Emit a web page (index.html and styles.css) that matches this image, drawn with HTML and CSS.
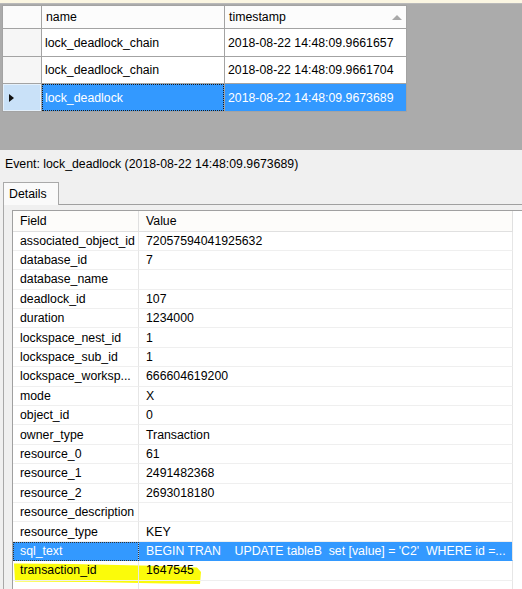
FILE: index.html
```html
<!DOCTYPE html>
<html>
<head>
<meta charset="utf-8">
<link rel="stylesheet" href="styles.css">
</head>
<body>
<div class="app">
  <div class="strip"></div>
  <div class="events">
    <div class="egrid">
      <div class="c rh hdr"></div>
      <div class="c hdr">name</div>
      <div class="c hdr ts">timestamp<span class="sort"></span></div>

      <div class="c rh"></div>
      <div class="c">lock_deadlock_chain</div>
      <div class="c">2018-08-22 14:48:09.9661657</div>

      <div class="c rh"></div>
      <div class="c">lock_deadlock_chain</div>
      <div class="c">2018-08-22 14:48:09.9661704</div>

      <div class="c rh selrh"><span class="tri"></span></div>
      <div class="c sel focus">lock_deadlock</div>
      <div class="c sel">2018-08-22 14:48:09.9673689</div>
    </div>
  </div>
  <div class="details">
    <div class="title">Event: lock_deadlock (2018-08-22 14:48:09.9673689)</div>
    <div class="tab">Details</div>
    <div class="page">
      <div class="dgrid">
        <div class="row head"><div class="f">Field</div><div class="v">Value</div></div>
        <div class="row"><div class="f">associated_object_id</div><div class="v">72057594041925632</div></div>
        <div class="row"><div class="f">database_id</div><div class="v">7</div></div>
        <div class="row"><div class="f">database_name</div><div class="v"></div></div>
        <div class="row"><div class="f">deadlock_id</div><div class="v">107</div></div>
        <div class="row"><div class="f">duration</div><div class="v">1234000</div></div>
        <div class="row"><div class="f">lockspace_nest_id</div><div class="v">1</div></div>
        <div class="row"><div class="f">lockspace_sub_id</div><div class="v">1</div></div>
        <div class="row"><div class="f">lockspace_worksp...</div><div class="v">666604619200</div></div>
        <div class="row"><div class="f">mode</div><div class="v">X</div></div>
        <div class="row"><div class="f">object_id</div><div class="v">0</div></div>
        <div class="row"><div class="f">owner_type</div><div class="v">Transaction</div></div>
        <div class="row"><div class="f">resource_0</div><div class="v">61</div></div>
        <div class="row"><div class="f">resource_1</div><div class="v">2491482368</div></div>
        <div class="row"><div class="f">resource_2</div><div class="v">2693018180</div></div>
        <div class="row"><div class="f">resource_description</div><div class="v"></div></div>
        <div class="row"><div class="f">resource_type</div><div class="v">KEY</div></div>
        <div class="row selrow"><div class="f focus">sql_text</div><div class="v">BEGIN TRAN    UPDATE tableB  set [value] = 'C2'  WHERE id =...</div></div>
        <div class="row mark">
          <svg class="hl" width="190" height="24" viewBox="0 0 190 24"><path d="M1 1.5 L60 2 L150 4 L184 5.5 L188 10 L187 22 L150 21.5 L80 20 L2 19.5 Z" fill="#fbfb0a"/></svg>
          <div class="f">transaction_id</div><div class="v">1647545</div>
        </div>
        <div class="row"><div class="f"></div><div class="v"></div></div>
      </div>
    </div>
  </div>
</div>
</body>
</html>
```

FILE: styles.css
```css
html, body {
  margin: 0;
  padding: 0;
}
body {
  width: 522px;
  height: 589px;
  overflow: hidden;
  font-family: "Liberation Sans", Arial, sans-serif;
  font-size: 12.3px;
  color: #000;
  background: #f0f0f0;
}
.app {
  width: 522px;
  height: 589px;
  display: flex;
  flex-direction: column;
}
.strip {
  height: 4px;
  background: #fbf6e2;
  border-bottom: 1px solid #b9b9b9;
  box-sizing: border-box;
}
.events {
  height: 146px;
  background: #ababab;
  padding: 1px 0 0 2px;
  box-sizing: border-box;
}
.egrid {
  display: grid;
  grid-template-columns: 38px 182px 181px;
  grid-template-rows: 22px 27px 26px 27px;
  gap: 1px;
  width: max-content;
  background: #a3a3a3;
  border: 1px solid #a3a3a3;
}
.c {
  background: #fff;
  display: flex;
  align-items: center;
  padding-left: 3px;
  white-space: nowrap;
  box-sizing: border-box;
}
.hdr {
  background: #fcfcfc;
  padding-left: 4px;
}
.rh {
  background: #f6f6f6;
  padding-left: 0;
}
.rh.hdr {
  background: #fbfbfb;
}
.ts {
  position: relative;
}
.sort {
  position: absolute;
  right: 4px;
  top: 9px;
  width: 0;
  height: 0;
  border-left: 5px solid transparent;
  border-right: 5px solid transparent;
  border-bottom: 5px solid #a9a9a9;
}
.selrh {
  background: #c9e1f8;
  box-shadow: inset 0 0 0 1px #e4f0fb;
  padding-left: 6px;
}
.tri {
  width: 0;
  height: 0;
  border-top: 4.5px solid transparent;
  border-bottom: 4.5px solid transparent;
  border-left: 5px solid #111;
}
.sel {
  background: #3399ff;
  color: #fff;
}
.c.focus {
  outline: 1px dotted #1a1a1a;
  outline-offset: -1px;
}
.details {
  flex: 1;
  display: flex;
  flex-direction: column;
  background: #f0f0f0;
  min-height: 0;
}
.title {
  padding: 7px 0 0 5px;
  line-height: 15px;
  height: 15px;
}
.tab {
  margin: 10px 0 0 3px;
  width: 56px;
  height: 23px;
  box-sizing: border-box;
  border: 1px solid #a9a9a9;
  border-bottom: none;
  background: #fafafa;
  padding: 4px 0 0 5px;
  line-height: 15px;
  position: relative;
  z-index: 1;
  margin-bottom: -1px;
}
.page {
  flex: 1;
  margin-left: 3px;
  border-top: 1px solid #a0a0a0;
  border-left: 1px solid #a8a8a8;
  padding: 5px 0 0 8px;
  min-height: 0;
}
.dgrid {
  height: 100%;
  background: #fff;
  border-top: 1px solid #a0a0a0;
  border-left: 1px solid #a0a0a0;
  box-sizing: border-box;
}
.row {
  display: grid;
  grid-template-columns: 126px 374px;
  height: 19.4px;
  box-sizing: border-box;
  position: relative;
}
.row .f, .row .v {
  display: flex;
  align-items: center;
  padding-left: 7px;
  white-space: pre;
  overflow: hidden;
  border-right: 1px solid #e6e6e6;
  border-bottom: 1px solid #efefef;
  box-sizing: border-box;
  position: relative;
  z-index: 1;
}
.row.head {
  height: 20.5px;
}
.row.head .f, .row.head .v {
  background: #fdfcfa;
  border-right: 1px solid #e0e0e0;
  border-bottom: 1px solid #e0e0e0;
}
.selrow .f, .selrow .v {
  background: #3399ff;
  color: #fff;
  border-bottom-color: #3399ff;
}
.selrow .f {
  border-right-color: #a9cdf5;
}
.selrow .f.focus {
  outline: 1px dotted #333;
  outline-offset: -1px;
}
.hl {
  position: absolute;
  left: 0;
  top: 1px;
  z-index: 0;
}
.mark .f, .mark .v {
  background: transparent;
}
```
